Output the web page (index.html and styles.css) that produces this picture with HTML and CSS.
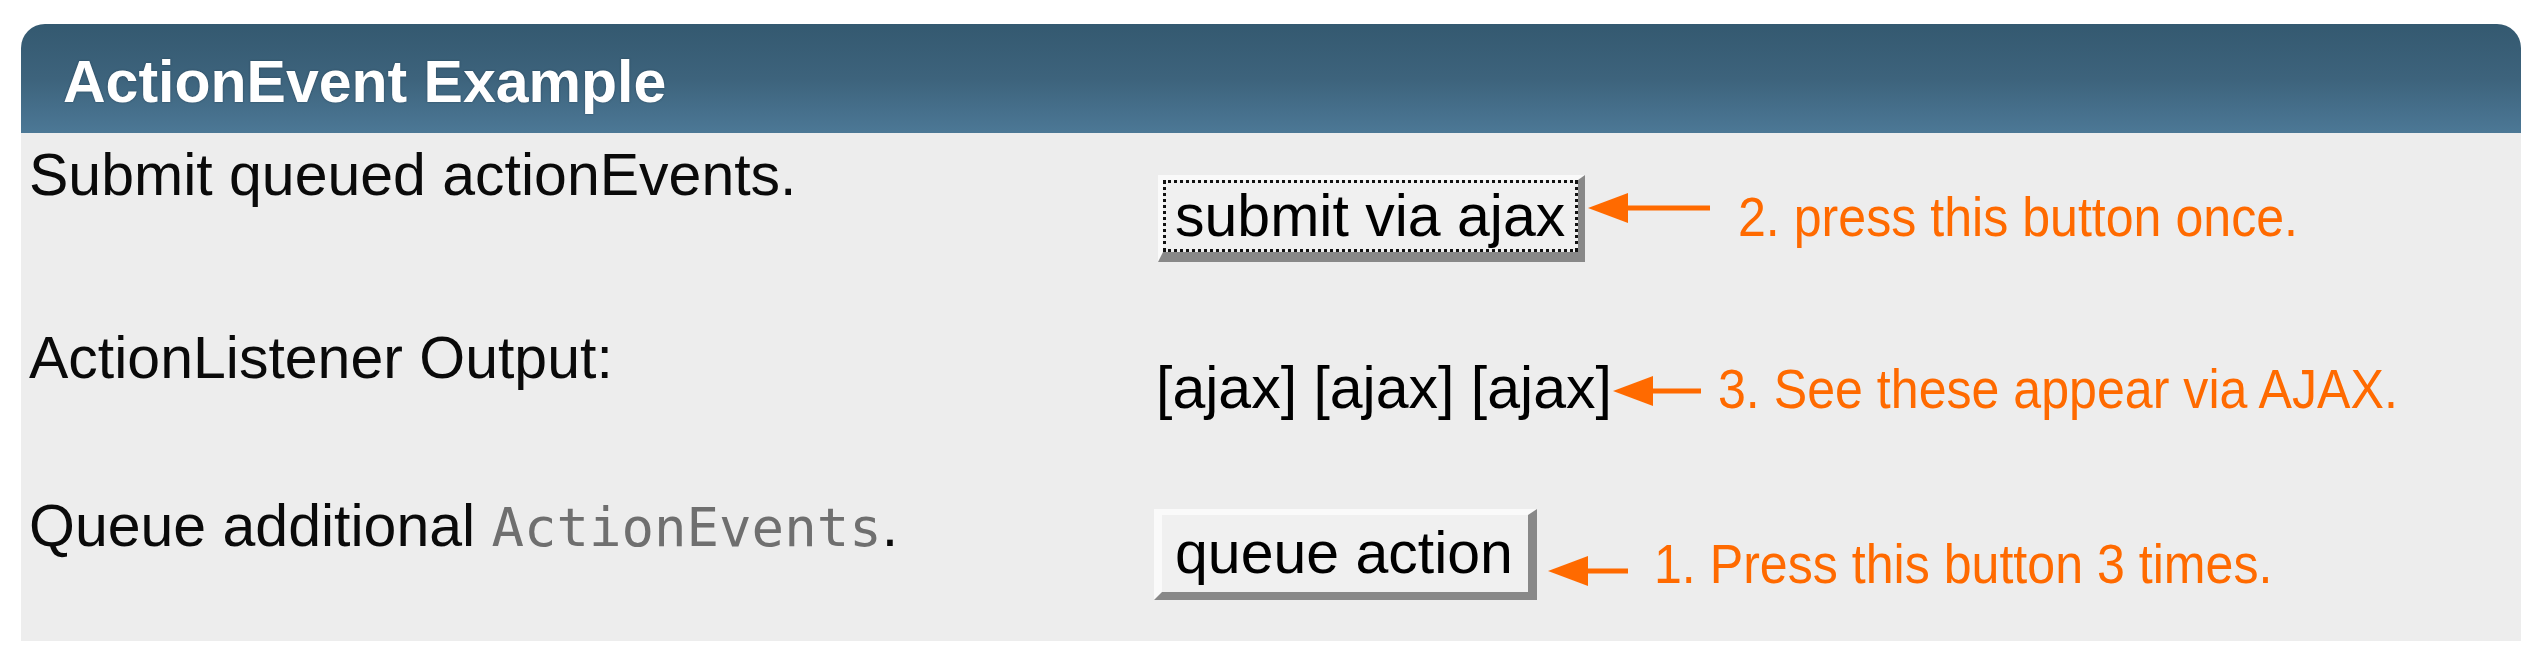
FILE: index.html
```html
<!DOCTYPE html>
<html>
<head>
<meta charset="utf-8">
<link rel="stylesheet" href="styles.css">
</head>
<body>
<div class="panel">
  <div class="panel-header">ActionEvent Example</div>
  <div class="panel-body">
    <div class="label">Submit queued actionEvents.</div>
    <div class="control c1">
      <button class="btn btn-submit"><span class="focus">submit via ajax</span></button>
      <svg class="arrow a1" width="122" height="30" viewBox="0 0 122 30"><polygon points="0,15 40,0 40,30" /><rect x="38" y="12.5" width="84" height="5" /></svg>
      <span class="note n1">2. press this button once.</span>
    </div>

    <div class="label">ActionListener Output:</div>
    <div class="control c2">
      <span class="output">[ajax] [ajax] [ajax]</span>
      <svg class="arrow a2" width="88" height="30" viewBox="0 0 88 30"><polygon points="0,15 40,0 40,30" /><rect x="38" y="12.5" width="50" height="5" /></svg>
      <span class="note n2">3. See these appear via AJAX.</span>
    </div>

    <div class="label">Queue additional <span class="code">ActionEvents</span>.</div>
    <div class="control c3">
      <button class="btn btn-queue">queue action</button>
      <svg class="arrow a3" width="80" height="30" viewBox="0 0 80 30"><polygon points="0,15 40,0 40,30" /><rect x="38" y="12.5" width="42" height="5" /></svg>
      <span class="note n3">1. Press this button 3 times.</span>
    </div>
  </div>
</div>
</body>
</html>
```

FILE: styles.css
```css
html, body {
  margin: 0;
  padding: 0;
  background: #ffffff;
}

body {
  font-family: "Liberation Sans", Arial, Helvetica, sans-serif;
  color: #000;
}

.panel {
  margin: 24px 21px 0 21px;
  width: 2500px;
}

.panel-header {
  box-sizing: border-box;
  height: 109px;
  padding: 26px 0 0 42px;
  border-radius: 24px 24px 0 0;
  background: linear-gradient(to bottom, #345970 0%, #3d637c 50%, #4c7896 100%);
  color: #ffffff;
  font-weight: bold;
  font-size: 59px;
  line-height: 65px;
  text-shadow: 0 0 2px rgba(20, 40, 60, 0.6);
  white-space: nowrap;
}

.panel-body {
  box-sizing: border-box;
  height: 508px;
  padding: 8px 0 0 8px;
  background: #ededed;
  display: grid;
  grid-template-columns: 1125px 1fr;
  grid-template-rows: 183px 168px auto;
}

.label {
  font-size: 59px;
  line-height: normal;
  white-space: nowrap;
  color: #0a0a0a;
}

.code {
  font-family: "DejaVu Sans Mono", "Liberation Mono", monospace;
  font-size: 54px;
  color: #6f6f6f;
}

.control {
  display: flex;
  align-items: flex-start;
  white-space: nowrap;
}

.btn {
  font-family: "Liberation Sans", Arial, Helvetica, sans-serif;
  font-size: 59px;
  color: #000;
  background: #f0f0f0;
  border-style: solid;
  border-color: #fafafa #888888 #888888 #fafafa;
  margin: 0;
  cursor: default;
}

.btn-submit {
  margin-top: 34px;
  margin-left: 4px;
  border-width: 5px 7px 10px 5px;
  padding: 0;
}

.focus {
  display: block;
  border: 3px dotted #111;
  padding: 0 10px 0 9px;
  line-height: 66px;
}

.btn-queue {
  margin-top: 17px;
  border-width: 6px 9px 8px 8px;
  padding: 0 15px 0 13px;
  line-height: 77px;
}

.output {
  margin-top: 30px;
  margin-left: 2px;
  font-size: 59px;
  line-height: normal;
}

.arrow {
  fill: #ff6a00;
  flex: none;
}

.a1 { margin-top: 52px; margin-left: 3px; }
.a2 { margin-top: 52px; margin-left: 1px; }
.a3 { margin-top: 64px; margin-left: 11px; }

.note {
  color: #ff6a00;
  font-size: 56px;
  line-height: 56px;
  transform: scaleX(0.895);
  transform-origin: left center;
}

.n1 { margin-top: 48px; margin-left: 28px; }
.n2 { margin-top: 37px; margin-left: 17px; }
.n3 { margin-top: 44px; margin-left: 26px; }
```
